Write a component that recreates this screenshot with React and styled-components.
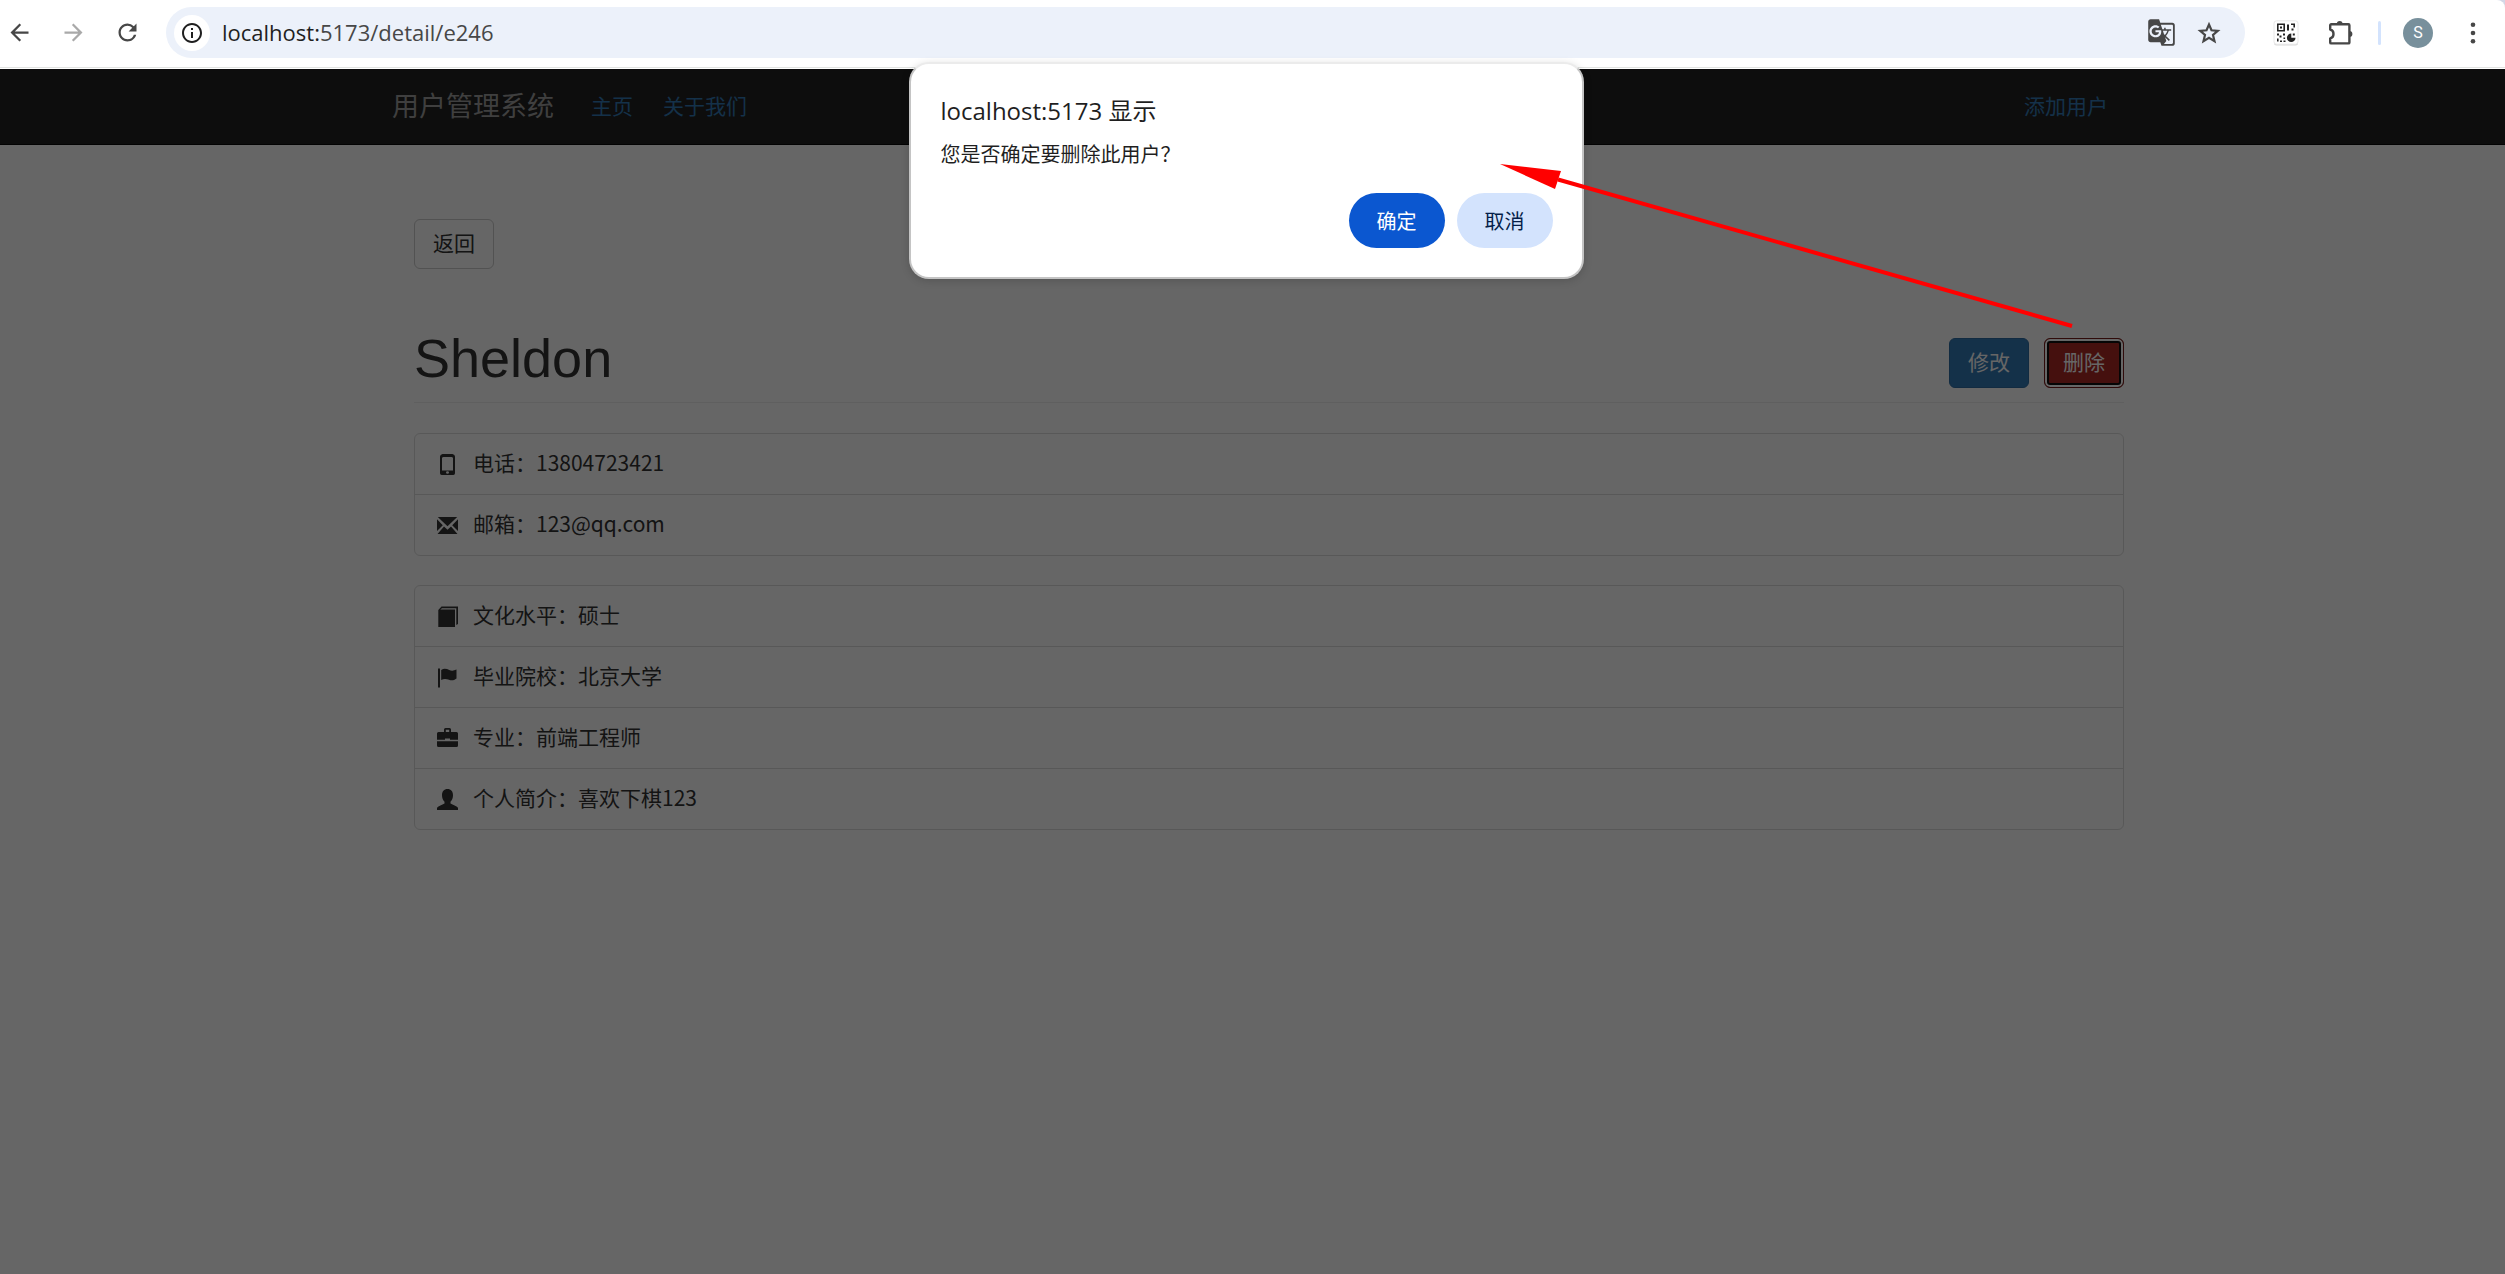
import React from 'react';
import styled, { createGlobalStyle, css } from 'styled-components';
import { MdArrowBack, MdArrowForward, MdRefresh, MdInfoOutline, MdGTranslate } from 'react-icons/md';

const cjk = '"Noto Sans CJK SC", sans-serif';
const ui = '"Open Sans", "Noto Sans CJK SC", sans-serif';

const GlobalStyle = createGlobalStyle`
  *, *::before, *::after { box-sizing: border-box; }
  body { margin: 0; background: #d3d7e6; font-family: ${cjk}; }
  button { font-family: inherit; margin: 0; cursor: pointer; }
`;

const Shell = styled.div`
  position: relative;
  display: flex;
  flex-direction: column;
  min-height: 100vh;
`;

/* Browser toolbar */
const Toolbar = styled.header`
  display: flex;
  align-items: center;
  height: 69px;
  padding: 0 14px 4px 1px;
  background: #fff;
  border-top-right-radius: 8px;
  box-shadow: inset 0 -1px #fff, inset 0 -2px #e1e3e1;
`;

const ToolGroup = styled.div`
  display: flex;
  align-items: center;
  gap: ${(p) => p.$gap}px;
`;

const IconButton = styled.button`
  display: flex;
  align-items: center;
  justify-content: center;
  width: 36px;
  height: 36px;
  padding: 0;
  border: 0;
  background: none;
  color: ${(p) => (p.$faded ? '#a9a9a9' : '#474747')};
`;

const Omnibox = styled.div`
  display: flex;
  flex: 1;
  align-items: center;
  height: 51px;
  margin: 0 23px 0 21px;
  padding: 0 18px 0 8px;
  border-radius: 26px;
  background: #ecf1fa;
`;

const SiteInfo = styled(IconButton)`
  border-radius: 50%;
  background: #fff;
  color: #1f1f1f;
`;

const Address = styled.a`
  flex: 1;
  margin-left: 12px;
  padding-bottom: 2px;
  font: 22px/30px ${ui};
  color: #474747;
  text-decoration: none;
`;

const Host = styled.span`
  color: #1f1f1f;
`;

const Divider = styled.span`
  width: 3px;
  height: 24px;
  border-radius: 2px;
  background: #d3e3fd;
`;

const Avatar = styled.span`
  width: 30px;
  height: 30px;
  border-radius: 50%;
  background: #78909c;
  color: #fff;
  font: 16px/30px Roboto, sans-serif;
  text-align: center;
`;

/* Web page behind the dialog */
const Page = styled.div`
  position: relative;
  flex: 1;
  background: #fff;
  color: #333;

  &::after {
    content: '';
    position: absolute;
    inset: 0;
    background: rgba(0, 0, 0, 0.6);
  }
`;

const Container = styled.div`
  max-width: 1754px;
  margin: 0 auto;
`;

const Navbar = styled.nav`
  padding-left: 33px;
  background: #222;
  border-bottom: 1px solid #080808;
`;

const NavRow = styled(Container)`
  display: flex;
  align-items: center;
  height: 75px;
  padding: 0 23px 4px 0;
`;

const NavLink = styled.a`
  padding: 0 15px;
  font-size: 21px;
  line-height: 30px;
  color: #337ab7;
  text-decoration: none;
  ${(p) => p.$end && css`margin-left: auto;`}
`;

const Brand = styled.a`
  margin-right: 22px;
  font-size: 27px;
  line-height: 30px;
  color: #9d9d9d;
  text-decoration: none;
`;

const Main = styled.main`
  padding: 74px 0 60px 33px;
`;

const Content = styled(Container)`
  padding: 0 22px;
`;

const tones = {
  plain: css`background: #fff; border-color: #ccc; color: #333;`,
  primary: css`background: #337ab7; border-color: #2e6da4; color: #fff;`,
  danger: css`
    background: #ac2925;
    border-color: #761c19;
    color: #fff;
    box-shadow: inset 0 0 0 2px #fff, inset 0 0 0 4px #101010;
  `,
};

const Button = styled.button`
  width: 80px;
  height: 50px;
  padding: 0 0 4px;
  border: 1px solid;
  border-radius: 6px;
  font-size: 21px;
  line-height: 30px;
  ${(p) => tones[p.$tone]}
`;

const Heading = styled.div`
  display: flex;
  align-items: flex-end;
  justify-content: space-between;
  margin: 60px 0 30px;
  padding-bottom: 14px;
  border-bottom: 1px solid #eee;
`;

const Name = styled.h1`
  margin: 0;
  font: 400 54px/59px "Liberation Sans", Arial, sans-serif;
`;

const List = styled.ul`
  margin: 0 0 29px;
  padding: 0;
  list-style: none;
  border: 1px solid #ddd;
  border-radius: 6px;
`;

const Item = styled.li`
  display: flex;
  align-items: center;
  gap: 15px;
  padding: 15px 22px;
  font-size: 21px;

  & + & { border-top: 1px solid #ddd; }
`;

const ItemText = styled.span`
  padding-bottom: 4px;
  line-height: 26px;
`;

/* Confirm dialog */
const Dialog = styled.section`
  position: absolute;
  top: 62px;
  left: 50%;
  width: 675px;
  margin-left: -344px;
  padding: 29px 29px 29px 30px;
  border: 2px solid #c4c4c4;
  border-top-color: #ebebeb;
  border-radius: 20px;
  background: #fff;
  color: #1f1f1f;
  box-shadow: 0 2px 8px rgba(0, 0, 0, 0.16);
`;

const DialogTitle = styled.h2`
  margin: 0;
  font: 24px/36px ${ui};
`;

const DialogText = styled.p`
  margin: 10px 0 24px;
  font-size: 20px;
  line-height: 30px;
`;

const DialogActions = styled.div`
  display: flex;
  justify-content: flex-end;
  gap: 12px;
`;

const DialogButton = styled.button`
  width: 96px;
  height: 55px;
  padding: 0;
  border: 0;
  border-radius: 28px;
  background: ${(p) => (p.$primary ? '#0b57d0' : '#d3e3fd')};
  color: ${(p) => (p.$primary ? '#fff' : '#041e49')};
  font-size: 20px;
`;

const Arrow = styled.svg`
  position: absolute;
  top: 160px;
  left: 50%;
  margin-left: 247px;
  pointer-events: none;
`;

const StarIcon = () => (
  <svg width="26" height="26" viewBox="0 0 26 26" fill="none" stroke="#474747" strokeWidth="2.2">
    <path d="M13 4.500l2.500 5.800 6.300.5-4.800 4.200 1.500 6.200-5.500-3.300-5.500 3.300 1.500-6.200-4.800-4.200 6.300-.5z" />
  </svg>
);

const QrIcon = () => (
  <svg width="26" height="26" viewBox="0 0 26 26">
    <rect x="1" y="1.6" width="24" height="24" rx="2.5" fill="#d9d9d9" />
    <rect x="1" y="0.8" width="24" height="23.4" rx="2.5" fill="#fff" stroke="#e8e8e8" />
    <g fill="#222">
      <path d="M4 3.5h8v8H4zM5.6 5.1v4.8h4.8V5.1z" fillRule="evenodd" />
      <path d="M7 6.5h2v2H7zM14 4.5h2v6h-2zM18 3.5h4v4h-1.6V5H18zM18.5 8.5h2v2h-2z" />
      <path d="M4 13.5h2v2H4zM6.5 15.5h2v2h-2zM10 13.5h2v2h-2zM4 18.5h1.6v3H4zM7 20.5h2V22H7zM10.5 17.5h1.6v1.6h-1.6zM10.5 20.5h2V22h-2z" />
      <path d="M18.3 13.5v4.2h4.2a4.3 4.3 0 1 1-4.2-4.2z" />
      <path d="M19.8 13.5h2v2h-2z" />
    </g>
  </svg>
);

const PuzzleIcon = () => (
  <svg width="26" height="26" viewBox="0 0 26 26" fill="none" stroke="#474747" strokeWidth="2.4" strokeLinejoin="round">
    <path d="M2.2 9.5V5.2a1 1 0 0 1 1-1h17.2a1 1 0 0 1 1 1v17.2a1 1 0 0 1-1 1H3.2a1 1 0 0 1-1-1v-4.1c2.1-.5 3.3-2.2 3.3-4.4s-1.2-3.9-3.3-4.4z" />
    <path d="M8.8 4a2.9 2.9 0 0 1 5.8 0zM21.5 11a2.9 2.9 0 0 1 0 5.8z" fill="#474747" stroke="none" />
  </svg>
);

const KebabIcon = () => (
  <svg width="26" height="26" viewBox="0 0 26 26" fill="#474747">
    <circle cx="13" cy="4.8" r="2.3" />
    <circle cx="13" cy="13" r="2.3" />
    <circle cx="13" cy="21.2" r="2.3" />
  </svg>
);

const glyphs = {
  phone: 'M5.5 0h10Q18 .6 18 2.5v16.8Q18 21 16.3 21H4.7Q3 21 3 19.3V2.5Q3 .6 5.5 0zM5 4v12.5h11V4Q15.5 3 14.5 3h-8Q5.5 3 5 4zM9 18.5q0 1.3 1.5 1.3t1.5-1.3-1.5-1.3T9 18.5z',
  mail: 'M.8 2h19.4l-9.7 9.2zM0 4.3l5.8 5.9L0 16zM21 4.3V16l-5.8-5.8zM7 11.5l3.5 3.3 3.5-3.3 6.5 7.5H.5z',
  book: 'M4.5 .5H21V18l-1.7 1V2.200H5L3.3 3.5H18V21H1.3V4z',
  flag: 'M1 1.500h2v19H1zM4.2 3c3-2 5.5-1 8 0s4.5.8 7.300-.5v9c-2.500 2-5 2.300-7.500 1.300s-5-1.500-7.800.2z',
  briefcase: 'M8.5 0h4Q14 0 14 1.500V4h5.500Q21 4 21 5.500v6.300h-8V10.500H8v1.300H0V5.500Q0 4 1.500 4H7V1.500Q7 0 8.500 0zM8.800 1.700V4h3.400V1.700zM0 13.300h21v4.200Q21 19 19.500 19h-18Q0 19 0 17.500z',
  user: 'M10.5 0c3.5 0 5.5 2.5 5.5 6.2 0 3-1 5-2.5 6.500v1.800c2.500 1.500 6 2.300 7.500 4.300V21H0v-2.200c1.500-2 5-2.800 7.500-4.300v-1.800C6 11.200 5 9.200 5 6.200 5 2.500 7 0 10.500 0z',
};

const Glyph = ({ name }) => (
  <svg width="21" height="21" viewBox="0 0 21 21" fill="#333" fillRule="evenodd" aria-hidden="true">
    <path d={glyphs[name]} />
  </svg>
);

const groups = [
  [
    ['phone', '电话：13804723421'],
    ['mail', '邮箱：123@qq.com'],
  ],
  [
    ['book', '文化水平：硕士'],
    ['flag', '毕业院校：北京大学'],
    ['briefcase', '专业：前端工程师'],
    ['user', '个人简介：喜欢下棋123'],
  ],
];

export default function App() {
  return (
    <>
      <GlobalStyle />
      <Shell>
        <Toolbar>
          <ToolGroup $gap={18}>
            <IconButton aria-label="后退"><MdArrowBack size={27} /></IconButton>
            <IconButton aria-label="前进" $faded><MdArrowForward size={27} /></IconButton>
            <IconButton aria-label="刷新"><MdRefresh size={27} /></IconButton>
          </ToolGroup>
          <Omnibox>
            <SiteInfo aria-label="网站信息"><MdInfoOutline size={24} /></SiteInfo>
            <Address href="#"><Host>localhost:</Host>5173/detail/e246</Address>
            <ToolGroup $gap={12}>
              <IconButton aria-label="翻译"><MdGTranslate size={29} /></IconButton>
              <IconButton aria-label="收藏"><StarIcon /></IconButton>
            </ToolGroup>
          </Omnibox>
          <ToolGroup $gap={19}>
            <IconButton aria-label="二维码"><QrIcon /></IconButton>
            <IconButton aria-label="扩展程序"><PuzzleIcon /></IconButton>
            <Divider />
            <IconButton aria-label="个人资料"><Avatar>S</Avatar></IconButton>
            <IconButton aria-label="菜单"><KebabIcon /></IconButton>
          </ToolGroup>
        </Toolbar>

        <Page>
          <Navbar>
            <NavRow>
              <Brand href="#">用户管理系统</Brand>
              <NavLink href="#">主页</NavLink>
              <NavLink href="#">关于我们</NavLink>
              <NavLink href="#" $end>添加用户</NavLink>
            </NavRow>
          </Navbar>
          <Main>
            <Content>
              <Button $tone="plain">返回</Button>
              <Heading>
                <Name>Sheldon</Name>
                <ToolGroup $gap={15}>
                  <Button $tone="primary">修改</Button>
                  <Button $tone="danger">删除</Button>
                </ToolGroup>
              </Heading>
              {groups.map((rows) => (
                <List key={rows[0][0]}>
                  {rows.map(([icon, text]) => (
                    <Item key={icon}>
                      <Glyph name={icon} />
                      <ItemText>{text}</ItemText>
                    </Item>
                  ))}
                </List>
              ))}
            </Content>
          </Main>
        </Page>

        <Dialog role="alertdialog" aria-labelledby="dialog-title">
          <DialogTitle id="dialog-title">localhost:5173 显示</DialogTitle>
          <DialogText>您是否确定要删除此用户？</DialogText>
          <DialogActions>
            <DialogButton $primary>确定</DialogButton>
            <DialogButton>取消</DialogButton>
          </DialogActions>
        </Dialog>

        <Arrow width="580" height="170" viewBox="0 0 580 170" aria-hidden="true">
          <path d="M58 19.5L572 166" stroke="#f00" strokeWidth="4" />
          <path d="M0 4l61 7-6 18z" fill="#f00" />
        </Arrow>
      </Shell>
    </>
  );
}
